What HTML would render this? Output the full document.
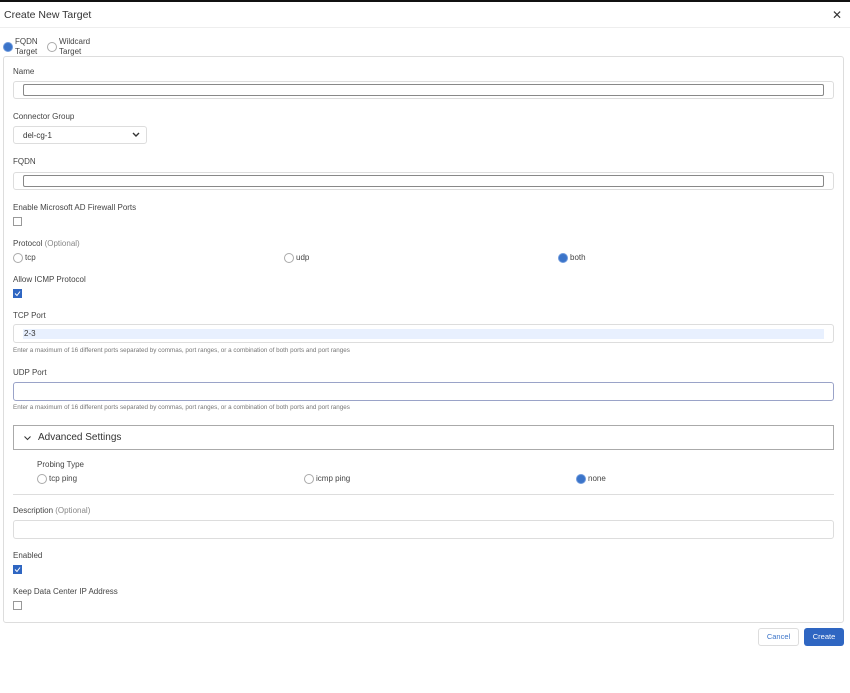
<!DOCTYPE html>
<html><head><style>
*{box-sizing:border-box;margin:0;padding:0}
body{width:850px;height:693px;background:#fff;font-family:"Liberation Sans",sans-serif;color:#333;position:relative;overflow:hidden}
.a{position:absolute}
.lbl{position:absolute;left:13px;font-size:8px;color:#444}
.lbl span{color:#888}
.inp{position:absolute;left:13px;width:821px;height:18px;border:1px solid #ddd;border-radius:3px;background:#fff}
.inner{position:absolute;left:9px;right:9px;top:2px;bottom:2px;border:1px solid #888;border-radius:2px}
.rad{position:absolute;width:10px;height:10px;border:1px solid #aaa;border-radius:50%;background:#fff}
.rad.on{border:1px solid #6c98dc;background:#3b74c9}
.rt{position:absolute;font-size:8px;color:#444}
.cb{position:absolute;left:13px;width:9px;height:9px;border:1px solid #999;background:#fff}
.cb.on{background:#2f66c2;border-color:#2f66c2}
.help{position:absolute;left:13px;font-size:6.3px;color:#777}
</style></head><body>
<div class="a" style="left:0;top:0;width:850px;height:2px;background:#111"></div>
<div class="a" style="left:4px;top:9px;font-size:10.5px;color:#333">Create New Target</div>
<div class="a" style="left:832px;top:8px;font-size:12px;color:#333">✕</div>
<div class="a" style="left:0;top:27px;width:850px;height:1px;background:#eee"></div>
<div class="rad on" style="left:3px;top:42px"></div>
<div class="rt" style="left:15px;top:37px;line-height:10px">FQDN<br>Target</div>
<div class="rad" style="left:47px;top:42px"></div>
<div class="rt" style="left:59px;top:37px;line-height:10px">Wildcard<br>Target</div>
<div class="a" style="left:3px;top:56px;width:841px;height:567px;border:1px solid #ddd;border-radius:3px"></div>

<div class="lbl" style="top:67px">Name</div>
<div class="inp" style="top:81px"><div class="inner"></div></div>
<div class="lbl" style="top:112px">Connector Group</div>
<div class="a" style="left:13px;top:126px;width:134px;height:18px;border:1px solid #ddd;border-radius:3px;font-size:8px;padding:4px 9px">del-cg-1<svg style="position:absolute;right:6px;top:5px" width="8" height="6"><path d="M1 1L4 4L7 1" stroke="#333" stroke-width="1.4" fill="none"/></svg></div>
<div class="lbl" style="top:157px">FQDN</div>
<div class="inp" style="top:172px"><div class="inner"></div></div>
<div class="lbl" style="top:203px">Enable Microsoft AD Firewall Ports</div>
<div class="cb" style="top:217px"></div>
<div class="lbl" style="top:239px">Protocol <span>(Optional)</span></div>
<div class="rad" style="left:13px;top:253px"></div><div class="rt" style="left:25px;top:253px">tcp</div>
<div class="rad" style="left:284px;top:253px"></div><div class="rt" style="left:296px;top:253px">udp</div>
<div class="rad on" style="left:558px;top:253px"></div><div class="rt" style="left:570px;top:253px">both</div>
<div class="lbl" style="top:275px">Allow ICMP Protocol</div>
<div class="cb on" style="top:289px"><svg width="7" height="7" style="position:absolute;left:0;top:0"><path d="M1 3.5L3 5.5L6 1.5" stroke="#fff" stroke-width="1" fill="none"/></svg></div>
<div class="lbl" style="top:311px">TCP Port</div>
<div class="inp" style="top:324px;height:19px"><div class="a" style="left:9px;right:9px;top:4px;height:10px;background:#e8f0fe;font-size:8px;padding:0 1px">2-3</div></div>
<div class="help" style="top:347px">Enter a maximum of 16 different ports separated by commas, port ranges, or a combination of both ports and port ranges</div>
<div class="lbl" style="top:368px">UDP Port</div>
<div class="inp" style="top:382px;height:19px;border-color:#9aa3c8"></div>
<div class="help" style="top:404px">Enter a maximum of 16 different ports separated by commas, port ranges, or a combination of both ports and port ranges</div>
<div class="a" style="left:13px;top:425px;width:821px;height:25px;border:1px solid #aaa;font-size:10px;color:#333;padding:6px 0 0 24px">Advanced Settings<svg style="position:absolute;left:10px;top:10px" width="7" height="5"><path d="M0.5 0.5L3.5 3.5L6.5 0.5" stroke="#333" stroke-width="1" fill="none"/></svg></div>
<div class="lbl" style="left:37px;top:460px">Probing Type</div>
<div class="rad" style="left:37px;top:474px"></div><div class="rt" style="left:49px;top:474px">tcp ping</div>
<div class="rad" style="left:304px;top:474px"></div><div class="rt" style="left:316px;top:474px">icmp ping</div>
<div class="rad on" style="left:576px;top:474px"></div><div class="rt" style="left:588px;top:474px">none</div>
<div class="a" style="left:13px;top:494px;width:821px;height:1px;background:#ddd"></div>
<div class="lbl" style="top:506px">Description <span>(Optional)</span></div>
<div class="inp" style="top:520px;height:19px"></div>
<div class="lbl" style="top:551px">Enabled</div>
<div class="cb on" style="top:565px"><svg width="7" height="7" style="position:absolute;left:0;top:0"><path d="M1 3.5L3 5.5L6 1.5" stroke="#fff" stroke-width="1" fill="none"/></svg></div>
<div class="lbl" style="top:587px">Keep Data Center IP Address</div>
<div class="cb" style="top:601px"></div>
<div class="a" style="left:758px;top:628px;width:41px;height:18px;border:1px solid #ddd;border-radius:3px;font-size:7.5px;color:#3b74c9;text-align:center;line-height:16px">Cancel</div>
<div class="a" style="left:804px;top:628px;width:40px;height:18px;background:#2f66c2;border-radius:3px;font-size:7.5px;color:#fff;text-align:center;line-height:18px">Create</div>
</body></html>
